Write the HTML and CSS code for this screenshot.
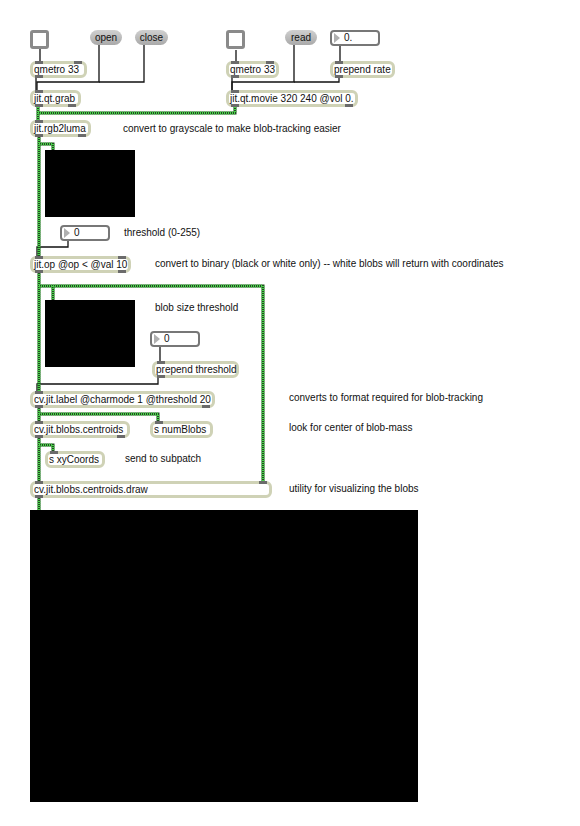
FILE: index.html
```html
<!DOCTYPE html>
<html>
<head>
<meta charset="utf-8">
<link rel="stylesheet" href="styles.css">
</head>
<body>
<div class="patch">
  <svg class="cords" width="580" height="826" viewBox="0 0 580 826">
    <g class="blk">
      <path d="M40 49V61"/>
      <path d="M36 77V90"/>
      <path d="M99 45V82H37V90"/>
      <path d="M144 45V82H99"/>
      <path d="M236 50V61"/>
      <path d="M232 77V90"/>
      <path d="M294 45V82H232V90"/>
      <path d="M339 77V82H294"/>
      <path d="M340 45V61"/>
      <path d="M68 241V247H37V257"/>
      <path d="M160 347V361"/>
      <path d="M158 377V384H37V392"/>
    </g>
    <g class="grn">
      <path d="M38 107V120"/>
      <path d="M235 107V113H38"/>
      <path d="M39 136V256"/>
      <path d="M39 144H53V150"/>
      <path d="M39 272V391"/>
      <path d="M39 286H263V482"/>
      <path d="M53 286V300"/>
      <path d="M39 407V421"/>
      <path d="M39 414H158V421"/>
      <path d="M39 437V481"/>
      <path d="M39 445H53V451"/>
      <path d="M39 497V510"/>
    </g>
    <g class="grn2">
      <path d="M38 107V120"/>
      <path d="M235 107V113H38"/>
      <path d="M39 136V256"/>
      <path d="M39 144H53V150"/>
      <path d="M39 272V391"/>
      <path d="M39 286H263V482"/>
      <path d="M53 286V300"/>
      <path d="M39 407V421"/>
      <path d="M39 414H158V421"/>
      <path d="M39 437V481"/>
      <path d="M39 445H53V451"/>
      <path d="M39 497V510"/>
    </g>
  </svg>

  <div class="toggle t1"></div>
  <div class="msg m-open">open</div>
  <div class="msg m-close">close</div>
  <div class="obj o-qm1">qmetro 33<i class="io in l"></i><i class="io in r"></i><i class="io out l"></i></div>
  <div class="obj o-grab">jit.qt.grab<i class="io in l"></i><i class="io out l"></i><i class="io out r"></i></div>

  <div class="toggle t2"></div>
  <div class="msg m-read">read</div>
  <div class="num n-rate"><span class="tri"></span>0.</div>
  <div class="obj o-qm2">qmetro 33<i class="io in l"></i><i class="io in r"></i><i class="io out l"></i></div>
  <div class="obj o-prate">prepend rate<i class="io in l"></i><i class="io out l"></i></div>
  <div class="obj o-movie">jit.qt.movie 320 240 @vol 0.<i class="io in l"></i><i class="io out l"></i><i class="io out r"></i></div>

  <div class="obj o-luma">jit.rgb2luma<i class="io in l"></i><i class="io out l"></i><i class="io out r"></i></div>
  <div class="cmt c1">convert to grayscale to make blob-tracking easier</div>

  <div class="pwin p1"></div>
  <div class="num n-thr"><span class="tri"></span>0</div>
  <div class="cmt c2">threshold (0-255)</div>

  <div class="obj o-op">jit.op @op &lt; @val 10<i class="io in l"></i><i class="io in r"></i><i class="io out l"></i><i class="io out r"></i></div>
  <div class="cmt c3">convert to binary (black or white only) -- white blobs will return with coordinates</div>

  <div class="pwin p2"></div>
  <div class="cmt c4">blob size threshold</div>
  <div class="num n-size"><span class="tri"></span>0</div>
  <div class="obj o-pthr">prepend threshold<i class="io in l"></i><i class="io out l"></i></div>

  <div class="obj o-label">cv.jit.label @charmode 1 @threshold 20<i class="io in l"></i><i class="io out l"></i><i class="io out r"></i></div>
  <div class="cmt c5">converts to format required for blob-tracking</div>

  <div class="obj o-cent">cv.jit.blobs.centroids<i class="io in l"></i><i class="io out l"></i><i class="io out r"></i></div>
  <div class="obj o-nb">s numBlobs<i class="io in l"></i></div>
  <div class="cmt c6">look for center of blob-mass</div>

  <div class="obj o-xy">s xyCoords<i class="io in l"></i></div>
  <div class="cmt c7">send to subpatch</div>

  <div class="obj o-draw">cv.jit.blobs.centroids.draw<i class="io in l"></i><i class="io in r"></i><i class="io out l"></i></div>
  <div class="cmt c8">utility for visualizing the blobs</div>

  <div class="pwin p3"></div>
</div>
</body>
</html>
```

FILE: styles.css
```css
html, body {
  margin: 0;
  padding: 0;
  background: #ffffff;
}
.patch {
  position: relative;
  width: 580px;
  height: 826px;
  overflow: hidden;
  font-family: "Liberation Sans", Arial, sans-serif;
  font-size: 10px;
  color: #111;
}
.cords {
  position: absolute;
  left: 0;
  top: 0;
  z-index: 2;
  pointer-events: none;
}
.cords path {
  fill: none;
}
.blk path {
  stroke: #111;
  stroke-width: 1.3;
}
.grn path {
  stroke: #1e4f1e;
  stroke-width: 3;
}
.grn2 path {
  stroke: #49d04a;
  stroke-width: 3;
  stroke-dasharray: 1 1;
}

.obj {
  position: absolute;
  height: 17px;
  box-sizing: border-box;
  border: 3px solid #cfd2b6;
  border-radius: 6px;
  background: #fff;
  padding-left: 1px;
  line-height: 11px;
  font-size: 10px;
  white-space: nowrap;
  z-index: 3;
}
.io {
  position: absolute;
  width: 8px;
  height: 3px;
  background: #6b6b6b;
}
.io.in { top: -3px; }
.io.out { bottom: -3px; }
.io.l { left: 2px; }
.io.r { right: 2px; }

.msg {
  position: absolute;
  height: 15px;
  box-sizing: border-box;
  border-radius: 8px;
  background: linear-gradient(#d0d0d0, #a9a9a9);
  text-align: center;
  line-height: 15px;
  font-size: 10px;
  z-index: 3;
}
.toggle {
  position: absolute;
  width: 19px;
  height: 19px;
  box-sizing: border-box;
  border: 3px solid #8a8a8a;
  border-radius: 3px;
  background: #fff;
  z-index: 3;
}
.num {
  position: absolute;
  width: 50px;
  height: 16px;
  box-sizing: border-box;
  border: 2px solid #777;
  border-radius: 4px;
  background: #fff;
  padding-left: 12px;
  line-height: 12px;
  font-size: 10px;
  z-index: 3;
}
.tri {
  position: absolute;
  left: 2px;
  top: 1px;
  width: 0;
  height: 0;
  border-top: 5px solid transparent;
  border-bottom: 5px solid transparent;
  border-left: 6px solid #b0b0b0;
}
.pwin {
  position: absolute;
  background: #000;
  z-index: 1;
}
.cmt {
  position: absolute;
  font-size: 10px;
  line-height: 12px;
  white-space: nowrap;
}

/* top left */
.t1 { left: 30px; top: 30px; }
.m-open { left: 90px; top: 30px; width: 32px; }
.m-close { left: 135px; top: 30px; width: 33px; }
.o-qm1 { left: 30px; top: 61px; width: 57px; }
.o-grab { left: 30px; top: 90px; width: 51px; }

/* top right */
.t2 { left: 226px; top: 30px; }
.m-read { left: 285px; top: 30px; width: 32px; }
.n-rate { left: 330px; top: 30px; }
.o-qm2 { left: 226px; top: 61px; width: 53px; }
.o-prate { left: 330px; top: 61px; width: 65px; }
.o-movie { left: 226px; top: 90px; width: 132px; }

.o-luma { left: 30px; top: 120px; width: 61px; }
.c1 { left: 123px; top: 123px; }

.p1 { left: 45px; top: 150px; width: 90px; height: 67px; }
.n-thr { left: 60px; top: 225px; }
.c2 { left: 124px; top: 227px; }

.o-op { left: 30px; top: 256px; width: 101px; }
.c3 { left: 155px; top: 258px; }

.p2 { left: 45px; top: 300px; width: 90px; height: 67px; }
.c4 { left: 155px; top: 302px; }
.n-size { left: 150px; top: 331px; }
.o-pthr { left: 152px; top: 361px; width: 87px; }

.o-label { left: 30px; top: 391px; width: 185px; }
.c5 { left: 289px; top: 392px; }

.o-cent { left: 30px; top: 421px; width: 100px; }
.o-nb { left: 150px; top: 421px; width: 63px; }
.c6 { left: 289px; top: 422px; }

.o-xy { left: 45px; top: 451px; width: 60px; }
.c7 { left: 125px; top: 453px; }

.o-draw { left: 30px; top: 481px; width: 242px; }
.c8 { left: 289px; top: 483px; }

.p3 { left: 30px; top: 510px; width: 388px; height: 292px; }
```
